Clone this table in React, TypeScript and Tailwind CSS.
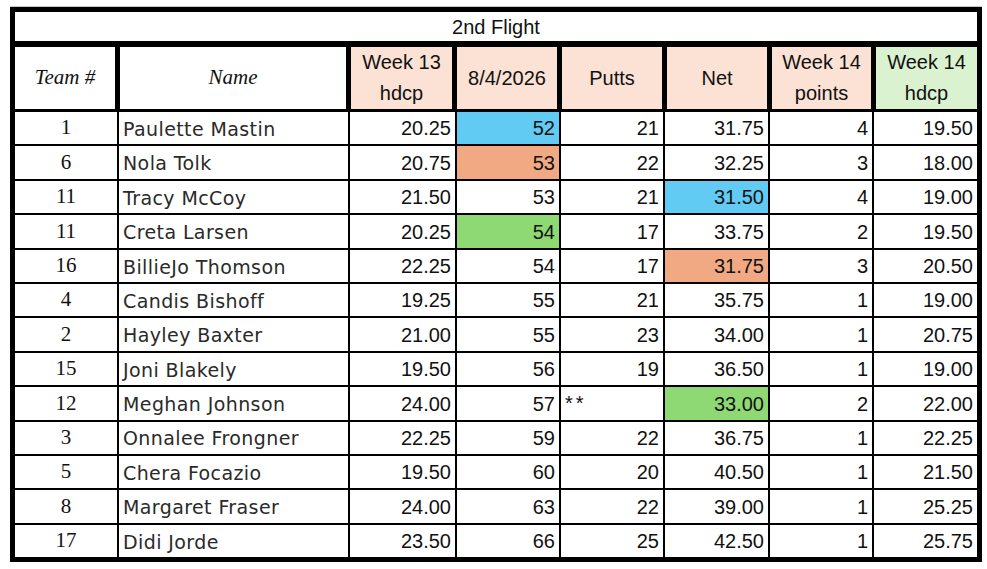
import React from 'react';

type Row = {
  team: string;
  name: string;
  hdcp13: string;
  gross: string;
  putts: string;
  net: string;
  points: string;
  hdcp14: string;
  grossBg?: string;
  netBg?: string;
};

const BLUE = 'bg-[#61cbf3]';
const ORANGE = 'bg-[#f1a983]';
const GREEN = 'bg-[#8ed973]';

const rows: Row[] = [
  { team: '1', name: 'Paulette Mastin', hdcp13: '20.25', gross: '52', putts: '21', net: '31.75', points: '4', hdcp14: '19.50', grossBg: BLUE },
  { team: '6', name: 'Nola Tolk', hdcp13: '20.75', gross: '53', putts: '22', net: '32.25', points: '3', hdcp14: '18.00', grossBg: ORANGE },
  { team: '11', name: 'Tracy McCoy', hdcp13: '21.50', gross: '53', putts: '21', net: '31.50', points: '4', hdcp14: '19.00', netBg: BLUE },
  { team: '11', name: 'Creta Larsen', hdcp13: '20.25', gross: '54', putts: '17', net: '33.75', points: '2', hdcp14: '19.50', grossBg: GREEN },
  { team: '16', name: 'BillieJo Thomson', hdcp13: '22.25', gross: '54', putts: '17', net: '31.75', points: '3', hdcp14: '20.50', netBg: ORANGE },
  { team: '4', name: 'Candis Bishoff', hdcp13: '19.25', gross: '55', putts: '21', net: '35.75', points: '1', hdcp14: '19.00' },
  { team: '2', name: 'Hayley Baxter', hdcp13: '21.00', gross: '55', putts: '23', net: '34.00', points: '1', hdcp14: '20.75' },
  { team: '15', name: 'Joni Blakely', hdcp13: '19.50', gross: '56', putts: '19', net: '36.50', points: '1', hdcp14: '19.00' },
  { team: '12', name: 'Meghan Johnson', hdcp13: '24.00', gross: '57', putts: '**', net: '33.00', points: '2', hdcp14: '22.00', netBg: GREEN },
  { team: '3', name: 'Onnalee Frongner', hdcp13: '22.25', gross: '59', putts: '22', net: '36.75', points: '1', hdcp14: '22.25' },
  { team: '5', name: 'Chera Focazio', hdcp13: '19.50', gross: '60', putts: '20', net: '40.50', points: '1', hdcp14: '21.50' },
  { team: '8', name: 'Margaret Fraser', hdcp13: '24.00', gross: '63', putts: '22', net: '39.00', points: '1', hdcp14: '25.25' },
  { team: '17', name: 'Didi Jorde', hdcp13: '23.50', gross: '66', putts: '25', net: '42.50', points: '1', hdcp14: '25.75' },
];

const sans = "font-['Liberation_Sans',Arial,sans-serif]";
const serif = "font-['Liberation_Serif','Times_New_Roman',serif]";
// handwriting face in the sheet; nearest installed width is DejaVu Sans
const script = "font-['Segoe_Print','DejaVu_Sans',sans-serif]";

function Num({ children, bg = 'bg-white' }: { children: React.ReactNode; bg?: string }) {
  return (
    <div className={`${bg} flex items-end justify-end pr-[4px] pb-[6px] text-[20px] leading-none text-[#111]`}>
      {children}
    </div>
  );
}

export default function App() {
  return (
    <div className="w-[987px] h-[569px] bg-white pt-[6px] pl-[10px]">
      <div className="w-[972px] border-t border-[#c8c8c8]">
        <div className="border-[5px] border-black bg-black flex flex-col">
          {/* Title */}
          <div className={`h-[29px] bg-white flex items-center justify-center text-[20px] ${sans} text-[#111]`}>
            2nd Flight
          </div>

          {/* Header */}
          <div className="mt-[6px] h-[60px] grid grid-cols-[100px_226px_101px_100px_100px_100px_99px_101px] gap-x-[5px]">
            <div className={`bg-white flex items-center justify-center italic text-[21px] ${serif} text-[#111]`}>
              Team #
            </div>
            <div className={`bg-white flex items-center justify-center italic text-[21px] ${serif} text-[#111]`}>
              Name
            </div>
            <div className={`bg-[#fbe2d5] flex flex-col items-center justify-center text-[20px] leading-[31px] ${sans} text-[#111]`}>
              <span>Week 13</span>
              <span>hdcp</span>
            </div>
            <div className={`bg-[#fbe2d5] flex items-center justify-center text-[20px] ${sans} text-[#111]`}>
              8/4/2026
            </div>
            <div className={`bg-[#fbe2d5] flex items-center justify-center text-[20px] ${sans} text-[#111]`}>
              Putts
            </div>
            <div className={`bg-[#fbe2d5] flex items-center justify-center text-[20px] ${sans} text-[#111]`}>
              Net
            </div>
            <div className={`bg-[#fbe2d5] flex flex-col items-center justify-center text-[20px] leading-[31px] ${sans} text-[#111]`}>
              <span>Week 14</span>
              <span>points</span>
            </div>
            <div className={`bg-[#daf2d0] flex flex-col items-center justify-center text-[20px] leading-[31px] ${sans} text-[#111]`}>
              <span>Week 14</span>
              <span>hdcp</span>
            </div>
          </div>

          {/* Data rows */}
          <div className="mt-[5px] flex flex-col gap-y-[2px]">
            {rows.map((r, i) => (
              <div
                key={i}
                className={`h-[32.4px] grid grid-cols-[102px_229px_105px_102px_102px_103px_102px_103px] gap-x-[2px] ${sans}`}
              >
                <div className={`bg-white flex items-center justify-center text-[21px] ${serif} text-[#111]`}>
                  {r.team}
                </div>
                <div className={`bg-white flex items-center pl-[4px] pt-[2px] text-[19px] tracking-[0.4px] ${script} text-[#2a2a2a]`}>
                  {r.name}
                </div>
                <Num>{r.hdcp13}</Num>
                <Num bg={r.grossBg}>{r.gross}</Num>
                {r.putts === '**' ? (
                  <div className="bg-white flex items-start pl-[4px] pt-[6px] text-[20px] leading-none tracking-[3px] text-[#111]">
                    **
                  </div>
                ) : (
                  <Num>{r.putts}</Num>
                )}
                <Num bg={r.netBg}>{r.net}</Num>
                <Num>{r.points}</Num>
                <Num>{r.hdcp14}</Num>
              </div>
            ))}
          </div>
        </div>
      </div>
    </div>
  );
}
